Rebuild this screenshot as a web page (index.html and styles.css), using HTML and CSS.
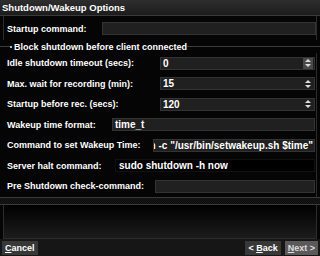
FILE: index.html
```html
<!DOCTYPE html>
<html lang="en">
<head>
  <meta charset="UTF-8">
  <title>Shutdown/Wakeup Options</title>
  <link rel="stylesheet" href="styles.css">
</head>
<body>
  <div class="dialog">
    <div class="titlebar">Shutdown/Wakeup Options</div>

    <div class="frame">
      <div class="row first">
        <label class="lbl w-startup">Startup command:</label>
        <div class="field"></div>
      </div>
    </div>

    <div class="group-title">
      <span class="rule lead"></span>
      <span class="check"></span>
      <span class="group-text">Block shutdown before client connected</span>
      <span class="rule"></span>
    </div>

    <div class="group">
      <div class="row">
        <label class="lbl w-spin">Idle shutdown timeout (secs):</label>
        <div class="field spin"><span>0</span><span class="arrows hot"><i class="up"></i><i class="down"></i></span></div>
      </div>
      <div class="row">
        <label class="lbl w-spin">Max. wait for recording (min):</label>
        <div class="field spin"><span>15</span><span class="arrows"><i class="up"></i><i class="down"></i></span></div>
      </div>
      <div class="row">
        <label class="lbl w-spin">Startup before rec. (secs):</label>
        <div class="field spin"><span>120</span><span class="arrows"><i class="up"></i><i class="down"></i></span></div>
      </div>
      <div class="row">
        <label class="lbl w-format">Wakeup time format:</label>
        <div class="field"><span>time_t</span></div>
      </div>
      <div class="row">
        <label class="lbl w-cmd">Command to set Wakeup Time:</label>
        <div class="field scrolled"><span>sh -c "/usr/bin/setwakeup.sh $time"</span></div>
      </div>
      <div class="row">
        <label class="lbl w-halt">Server halt command:</label>
        <div class="field focus"><span>sudo shutdown -h now</span></div>
      </div>
      <div class="row">
        <label class="lbl w-pre">Pre Shutdown check-command:</label>
        <div class="field"></div>
      </div>
    </div>

    <div class="band"></div>
    <div class="help"></div>

    <div class="buttons">
      <button class="btn"><u>C</u>ancel</button>
      <span class="spacer"></span>
      <button class="btn">&lt; <u>B</u>ack</button>
      <button class="btn next"><u>N</u>ext &gt;</button>
    </div>
  </div>
</body>
</html>
```

FILE: styles.css
```css
body { margin: 0; background: #000; font-family: "Liberation Sans", Arial, sans-serif; font-weight: bold; color: #fff; }
.dialog { width: 320px; height: 256px; display: flex; flex-direction: column; background: #050505; overflow: hidden; }

.titlebar { height: 15px; line-height: 15px; padding-left: 2px; font-size: 9.5px; background: linear-gradient(#2e2e2e, #1c1c1c); border-bottom: 1px solid #3a3a3a; }

.frame { margin: 0 3px; padding-top: 6px; height: 24px; border-left: 1px solid #2c2c2c; border-right: 1px solid #2c2c2c; box-sizing: border-box; flex: none; }

.row { display: flex; align-items: center; height: 20.5px; padding-left: 7px; padding-right: 1px; }
.row.first { height: 13px; padding-left: 3px; padding-right: 0; }
.lbl { font-size: 9px; flex: none; white-space: nowrap; }
.w-startup { width: 95px; }
.w-spin { width: 153px; }
.w-format { width: 105px; }
.w-cmd { width: 146px; }
.w-halt { width: 108px; }
.w-pre { width: 148px; }

.field { flex: 1; height: 13px; box-sizing: border-box; background: #202020; border: 1px solid #333; display: flex; align-items: center; padding-left: 2px; font-size: 10px; overflow: hidden; white-space: nowrap; }
.field.scrolled { justify-content: flex-end; padding-right: 1px; }
.field.focus { background: #000; border-color: #111; padding-left: 3px; }
.spin { justify-content: space-between; padding-right: 0; }

.arrows { width: 10px; height: 11px; display: flex; flex-direction: column; align-items: center; justify-content: center; gap: 2px; margin-right: 1px; }
.arrows.hot { background: #4a4a4a; }
.arrows i { width: 0; height: 0; border-left: 3px solid transparent; border-right: 3px solid transparent; }
.arrows .up { border-bottom: 3px solid #ddd; }
.arrows .down { border-top: 3px solid #ddd; }

.group-title { display: flex; align-items: center; height: 13px; font-size: 9px; flex: none; }
.rule { flex: 1; height: 1px; background: #3a3a3a; }
.rule.lead { flex: none; width: 10px; }
.check { width: 2px; height: 2px; background: #bbb; margin: 1px 2px 0 0; }
.group { border-right: 1px solid #2c2c2c; margin-right: 3px; flex: none; }

.band { height: 8px; box-sizing: border-box; border-top: 1px solid #3a3a3a; border-bottom: 1px solid #3a3a3a; background: repeating-conic-gradient(#181818 0 25%, #0c0c0c 0 50%) 0 0 / 2px 2px; flex: none; }
.help { flex: 1; margin: 0 3px; border: 1px solid #2c2c2c; border-top: none; background: linear-gradient(#000, #1c1c1c); }

.buttons { height: 17px; display: flex; align-items: center; padding: 0 2px; gap: 4px; background: #161616; flex: none; }
.spacer { flex: 1; }
.btn { font: bold 9px "Liberation Sans", Arial, sans-serif; color: #fff; background: #383838; border: none; height: 14px; padding: 0 3px; margin: 0; }
.btn.next { background: #5a5a5a; color: #ddd; }
```
